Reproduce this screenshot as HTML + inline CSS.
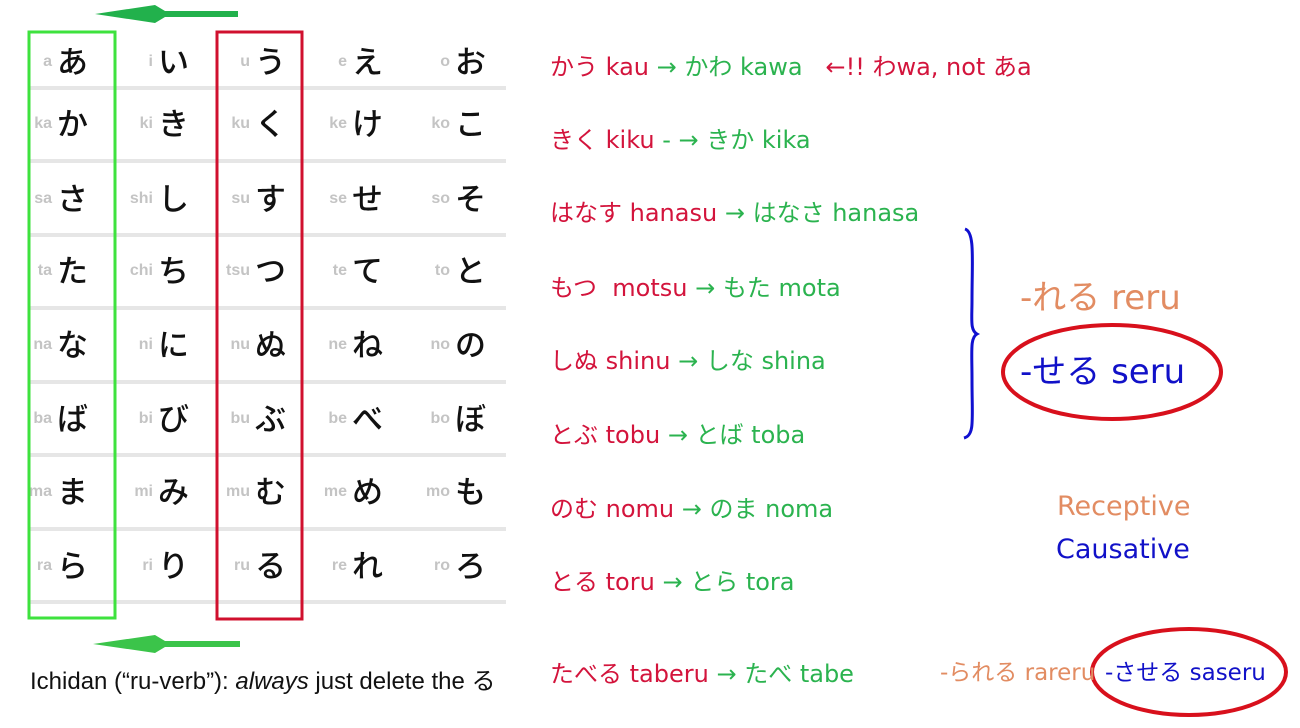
<!DOCTYPE html><html><head><meta charset="utf-8"><style>
body{margin:0;width:1300px;height:728px;background:#fff;position:relative;overflow:hidden;font-family:"Liberation Sans","Noto Sans CJK JP",sans-serif}
.a{position:absolute;white-space:nowrap}
.r{color:#c4c4c4;font-weight:bold;font-size:16px;text-align:right;width:40px}
.k{font-size:31px;color:#111;font-family:"Noto Sans CJK JP",sans-serif;font-weight:500}
.hl{position:absolute;left:30px;width:476px;height:4px;background:#e6e6e6}
.t{font-size:24px;font-family:"DejaVu Sans","Noto Sans CJK JP",sans-serif;line-height:1}
.R{color:#d3143c}.G{color:#2bb34f}.O{color:#e28c62}.B{color:#1111c8}
</style></head><body>
<div class="hl" style="top:86px"></div><div class="hl" style="top:159px"></div><div class="hl" style="top:233px"></div><div class="hl" style="top:306px"></div><div class="hl" style="top:380px"></div><div class="hl" style="top:453px"></div><div class="hl" style="top:527px"></div><div class="hl" style="top:600px"></div>
<div id="tbl"></div>
<script>
var rows=[["a","あ","i","い","u","う","e","え","o","お"],["ka","か","ki","き","ku","く","ke","け","ko","こ"],["sa","さ","shi","し","su","す","se","せ","so","そ"],["ta","た","chi","ち","tsu","つ","te","て","to","と"],["na","な","ni","に","nu","ぬ","ne","ね","no","の"],["ba","ば","bi","び","bu","ぶ","be","べ","bo","ぼ"],["ma","ま","mi","み","mu","む","me","め","mo","も"],["ra","ら","ri","り","ru","る","re","れ","ro","ろ"]];
var ys=[62,124,199,271,345,419,492,566],xs=[57,158,255,352,455],h="";
rows.forEach(function(r,i){for(var c=0;c<5;c++){h+='<div class="a r" style="left:'+(xs[c]-45)+'px;top:'+(ys[i]-9)+'px">'+r[c*2]+'</div><div class="a k" style="left:'+xs[c]+'px;top:'+(ys[i]-21)+'px;line-height:1.2">'+r[c*2+1]+'</div>';}});
document.getElementById("tbl").innerHTML=h;
</script>
<svg class="a" style="left:0;top:0" width="1300" height="728">
<rect x="29" y="32" width="86" height="586" fill="none" stroke="#3ee23e" stroke-width="3"/>
<rect x="217" y="32" width="85" height="587" fill="none" stroke="#d0102e" stroke-width="3"/>
<polygon points="95,14 155,5 165,11 238,11 238,17 165,17 155,23" fill="#22b14c"/>
<polygon points="93,644 155,635 165,641 240,641 240,647 165,647 155,653" fill="#3bc44a"/>
<path d="M965,229 C975,232 972,260 972,300 C972,320 970,330 977,334 C970,338 972,350 972,380 C972,420 975,435 964,438" fill="none" stroke="#1010d0" stroke-width="3"/>
<ellipse cx="1112" cy="372" rx="109" ry="47" fill="none" stroke="#d8101c" stroke-width="4"/>
<ellipse cx="1189" cy="672" rx="97" ry="43" fill="none" stroke="#d8101c" stroke-width="4"/>
</svg>
<div class="a t" style="left:550px;top:55px"><span class="R">かう kau</span> <span class="G">→ かわ kawa</span> <span class="R">&nbsp;&nbsp;←!! わwa, not あa</span></div>
<div class="a t" style="left:550px;top:128px"><span class="R">きく kiku</span> <span class="G">- → きか kika</span></div>
<div class="a t" style="left:550px;top:201px"><span class="R">はなす hanasu</span> <span class="G">→ はなさ hanasa</span></div>
<div class="a t" style="left:550px;top:276px"><span class="R">もつ &nbsp;motsu</span> <span class="G">→ もた mota</span></div>
<div class="a t" style="left:550px;top:349px"><span class="R">しぬ shinu</span> <span class="G">→ しな shina</span></div>
<div class="a t" style="left:550px;top:423px"><span class="R">とぶ tobu</span> <span class="G">→ とば toba</span></div>
<div class="a t" style="left:550px;top:497px"><span class="R">のむ nomu</span> <span class="G">→ のま noma</span></div>
<div class="a t" style="left:550px;top:570px"><span class="R">とる toru</span> <span class="G">→ とら tora</span></div>
<div class="a t" style="left:550px;top:662px"><span class="R">たべる taberu</span> <span class="G">→ たべ tabe</span></div>
<div class="a t O" style="left:1020px;top:281px;font-size:34px">-れる reru</div>
<div class="a t B" style="left:1020px;top:355px;font-size:34px">-せる seru</div>
<div class="a t O" style="left:1057px;top:493px;font-size:27px">Receptive</div>
<div class="a t B" style="left:1056px;top:536px;font-size:27px">Causative</div>
<div class="a t O" style="left:940px;top:662px;font-size:23px">-られる rareru</div>
<div class="a t B" style="left:1105px;top:662px;font-size:23px">-させる saseru</div>
<div class="a" style="left:30px;top:661px;font-size:24px;color:#111">Ichidan (“ru-verb”): <i>always</i> just delete the る</div>
</body></html>
